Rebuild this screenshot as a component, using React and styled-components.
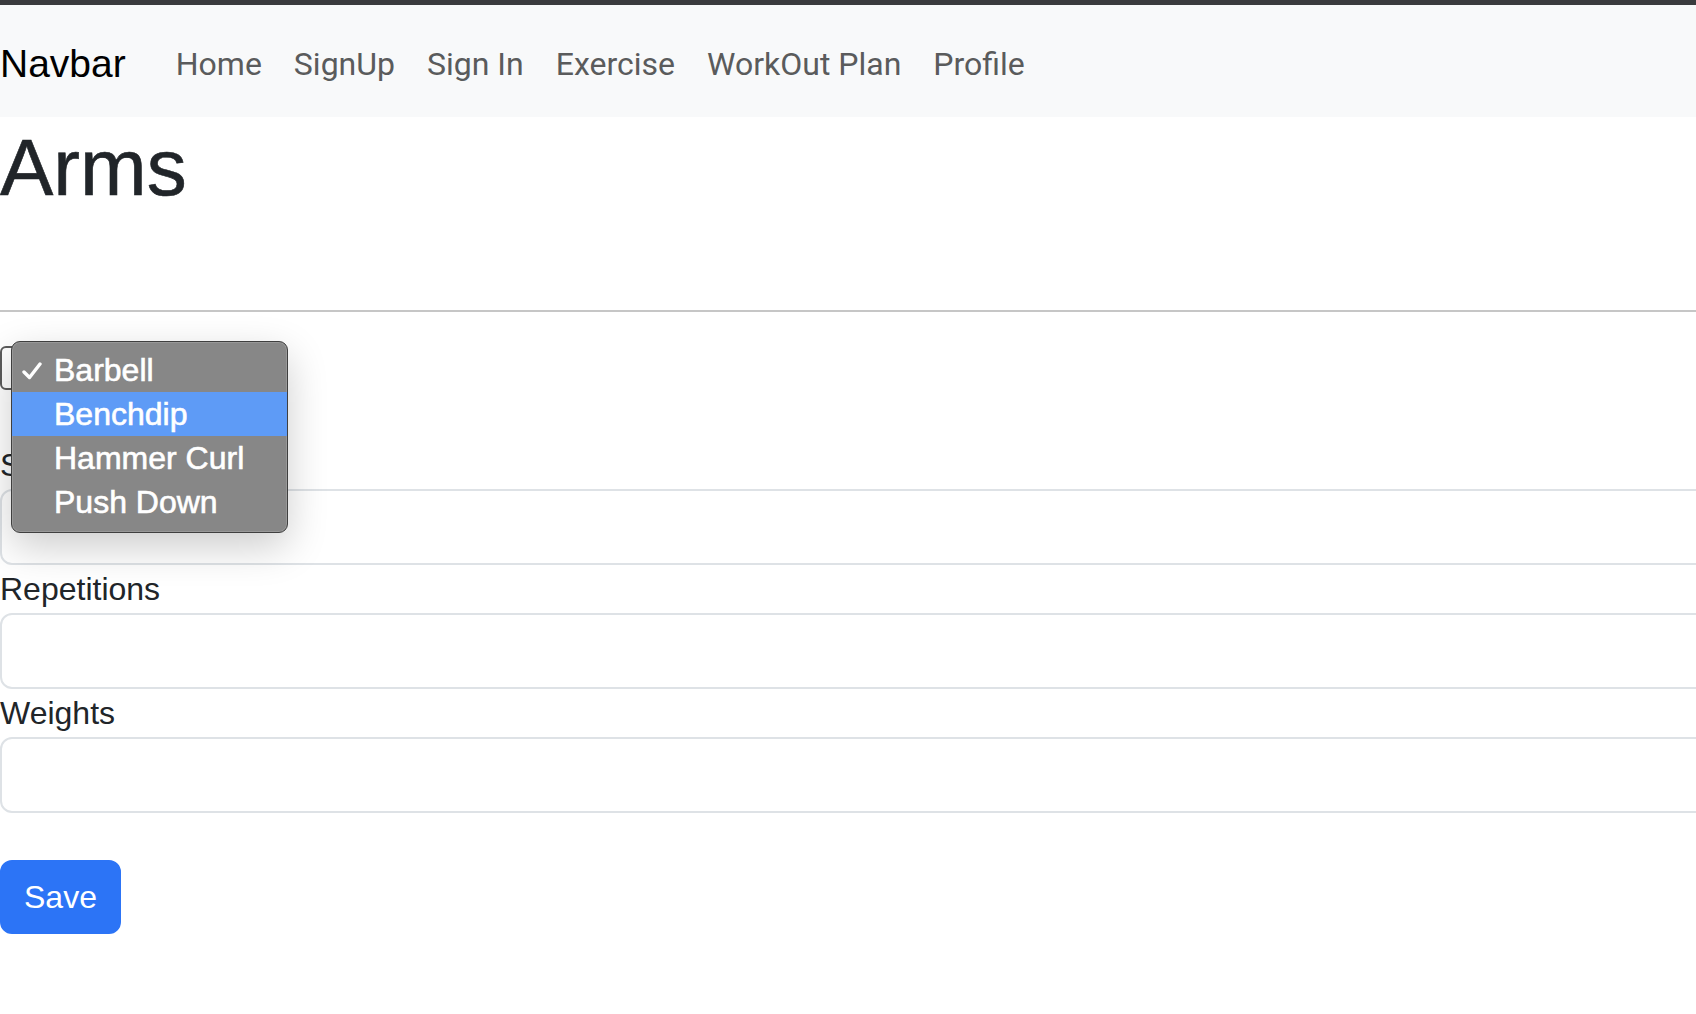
import React from 'react';
import styled, { createGlobalStyle } from 'styled-components';

const GlobalStyle = createGlobalStyle`
  html, body {
    margin: 0;
    padding: 0;
    background: #fff;
    overflow-x: hidden;
  }
  body {
    font-family: "Liberation Sans", Arial, sans-serif;
    color: #212529;
  }
`;

const TopBar = styled.div`
  height: 5px;
  background: #3a3b3e;
`;

const Nav = styled.nav`
  height: 112px;
  box-sizing: border-box;
  padding-top: 5px;
  display: flex;
  align-items: center;
  background: #f8f9fa;
`;

const Brand = styled.a`
  font-family: "Liberation Sans", Arial, sans-serif;
  font-size: 39px;
  color: #000;
  text-decoration: none;
  margin-right: 34px;
  line-height: 60px;
`;

const NavLink = styled.a`
  font-family: Roboto, "Liberation Sans", sans-serif;
  font-size: 32px;
  color: #5a5b5c;
  text-decoration: none;
  padding: 0 16px;
  line-height: 48px;
`;

const Title = styled.h1`
  margin: 3px 0 94px;
  font-size: 80px;
  line-height: 96px;
  font-weight: 500;
  color: #212529;
  -webkit-text-stroke: 0.6px #212529;
`;

const Divider = styled.hr`
  margin: 0;
  border: 0;
  height: 2px;
  background: #c6c6c6;
`;

const Form = styled.form`
  display: flex;
  flex-direction: column;
  align-items: flex-start;
`;

const SelectWrap = styled.div`
  position: relative;
  margin: 34px 0 51px;
`;

const SelectBox = styled.div`
  width: 250px;
  height: 44px;
  box-sizing: border-box;
  border: 2px solid #5c5c5c;
  border-radius: 6px;
  background: #fff;
`;

const Menu = styled.ul`
  position: absolute;
  left: 11px;
  top: -5px;
  width: 277px;
  box-sizing: border-box;
  margin: 0;
  padding: 6px 0 8px;
  list-style: none;
  background: #878787;
  border: 1px solid #3f3f3f;
  border-radius: 9px;
  box-shadow: 0 14px 40px rgba(0, 0, 0, 0.2), 0 0 0 1px rgba(255, 255, 255, 0.15) inset;
  z-index: 10;
`;

const MenuItem = styled.li`
  position: relative;
  height: 44px;
  display: flex;
  align-items: center;
  padding-left: 42px;
  font-size: 32px;
  color: #fff;
  -webkit-text-stroke: 0.6px #fff;
  background: ${(p) => (p.$active ? '#5e9bf6' : 'transparent')};
`;

const Check = styled.svg`
  position: absolute;
  left: 10px;
  top: 14px;
  width: 20px;
  height: 18px;
`;

const Label = styled.label`
  display: block;
  font-size: 32px;
  line-height: 48px;
  color: #212529;
`;

const Input = styled.input`
  display: block;
  width: calc(100% + 40px);
  height: 76px;
  box-sizing: border-box;
  border: 2px solid #dee2e6;
  border-radius: 12px;
  padding: 12px 24px;
  font-size: 32px;
  background: #fff;
`;

const Field = styled.div`
  width: 100%;
`;

const Button = styled.button`
  margin-top: 47px;
  font-family: "Liberation Sans", Arial, sans-serif;
  font-size: 32px;
  line-height: 48px;
  padding: 11px 22px;
  border: 2px solid #2c74f6;
  border-radius: 12px;
  background: #2c74f6;
  color: #fff;
  cursor: pointer;
`;

const exercises = ['Barbell', 'Benchdip', 'Hammer Curl', 'Push Down'];

const App = () => {
  return (
    <>
      <GlobalStyle />
      <TopBar />
      <Nav>
        <Brand href="#">Navbar</Brand>
        <NavLink href="#">Home</NavLink>
        <NavLink href="#">SignUp</NavLink>
        <NavLink href="#">Sign In</NavLink>
        <NavLink href="#">Exercise</NavLink>
        <NavLink href="#">WorkOut Plan</NavLink>
        <NavLink href="#">Profile</NavLink>
      </Nav>
      <Title>Arms</Title>
      <Divider />
      <Form onSubmit={(e) => e.preventDefault()}>
        <SelectWrap>
          <SelectBox />
          <Menu>
            {exercises.map((name, i) => (
              <MenuItem key={name} $active={i === 1}>
                {i === 0 && (
                  <Check viewBox="0 0 20 18">
                    <polyline
                      points="2,10 7.5,15.5 18,2"
                      fill="none"
                      stroke="#fff"
                      strokeWidth="3.4"
                      strokeLinecap="round"
                      strokeLinejoin="round"
                    />
                  </Check>
                )}
                {name}
              </MenuItem>
            ))}
          </Menu>
        </SelectWrap>
        <Field>
          <Label>Sets</Label>
          <Input type="text" />
        </Field>
        <Field>
          <Label>Repetitions</Label>
          <Input type="text" />
        </Field>
        <Field>
          <Label>Weights</Label>
          <Input type="text" />
        </Field>
        <Button type="submit">Save</Button>
      </Form>
    </>
  );
};

export default App;
